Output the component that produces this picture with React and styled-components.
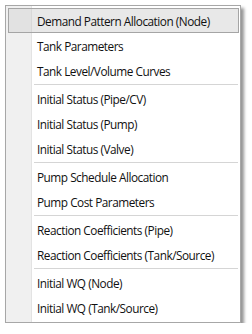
import React from "react";
import styled, { createGlobalStyle } from "styled-components";

const Global = createGlobalStyle`
  html, body { margin: 0; padding: 0; background: #ffffff; }
  body { padding: 5px 0 0 5px; font-family: "Open Sans", "Noto Sans", sans-serif; }
`;

const Menu = styled.ul`
  list-style: none;
  margin: 0;
  box-sizing: border-box;
  width: 236px;
  padding: 2px 1px 2px 2px;
  border: 1px solid #a7a7a7;
  background: linear-gradient(to right, #f0f0f0 0 25px, #e3e3e3 25px 26px, #ffffff 26px);
  box-shadow: 3px 3px 3px rgba(0, 0, 0, 0.42);
  display: flex;
  flex-direction: column;
`;

const Item = styled.li`
  box-sizing: border-box;
  height: 25px;
  display: flex;
  align-items: center;
  padding-left: 28px;
  border: 1px solid ${(p) => (p.$active ? "#a5a5a5" : "transparent")};
  background: ${(p) =>
    p.$active
      ? "linear-gradient(to right, #e2e2e2 0 22px, #d8d8d8 22px 23px, #e8e8e8 23px)"
      : "transparent"};
  font-size: 11.8px;
  letter-spacing: -0.48px;
  color: #111111;
  white-space: nowrap;
`;

const Separator = styled.li`
  height: 3px;
  display: flex;
  align-items: center;
  padding-left: 26px;
  &::after {
    content: "";
    flex: 1;
    height: 1px;
    margin-right: 1px;
    background: #d5d5d5;
  }
`;

const entries = [
  "Demand Pattern Allocation (Node)",
  "Tank Parameters",
  "Tank Level/Volume Curves",
  "-",
  "Initial Status (Pipe/CV)",
  "Initial Status (Pump)",
  "Initial Status (Valve)",
  "-",
  "Pump Schedule Allocation",
  "Pump Cost Parameters",
  "-",
  "Reaction Coefficients (Pipe)",
  "Reaction Coefficients (Tank/Source)",
  "-",
  "Initial WQ (Node)",
  "Initial WQ (Tank/Source)",
];

export default function App() {
  return (
    <>
      <Global />
      <Menu>
        {entries.map((e, i) =>
          e === "-" ? (
            <Separator key={i} />
          ) : (
            <Item key={i} $active={i === 0}>
              {e}
            </Item>
          )
        )}
      </Menu>
    </>
  );
}
